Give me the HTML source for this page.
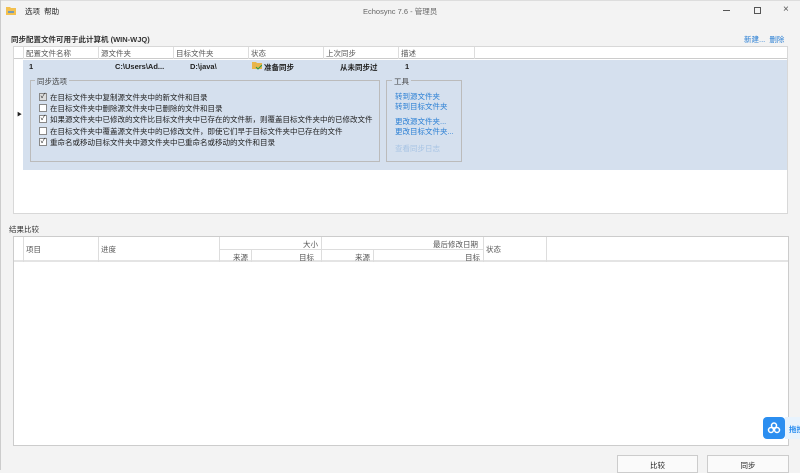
<!DOCTYPE html>
<html><head><meta charset="utf-8"><style>
*{margin:0;padding:0;box-sizing:border-box}
body{width:800px;height:470px;background:#f3f3f3;font-family:"Liberation Sans","Noto Sans CJK SC",sans-serif;font-size:7.5px;color:#222;position:relative;overflow:hidden;border-left:1px solid #ccc}
.a{position:absolute;white-space:nowrap}
.blue{color:#2a7fd4}
.hdr{background:#fff;border-bottom:1px solid #ddd}
.cb{position:absolute;width:8px;height:8px;border:1px solid #888;background:#fff;font-size:7px;line-height:6px;text-align:center}
</style></head><body>
<div class="a" style="left:0;top:0;width:800px;height:1px;background:#ddd"></div>
<svg class="a" style="left:5px;top:6px" width="11" height="10"><path d="M0 1h4l1 1h5v7H0z" fill="#f3c04f"/><path d="M2 6h6" stroke="#4a8fd8" stroke-width="1.5"/></svg>
<div class="a" style="left:24px;top:6px;font-size:7.5px">选项&nbsp;&nbsp;帮助</div>
<div class="a" style="left:362px;top:6px;font-size:7.5px;color:#666">Echosync 7.6 - 管理员</div>
<div class="a" style="left:722px;top:10px;width:7px;height:1px;background:#555"></div>
<div class="a" style="left:753px;top:7px;width:7px;height:7px;border:1px solid #555"></div>
<div class="a" style="left:782px;top:4px;font-size:10px;color:#555">×</div>
<div class="a" style="left:10px;top:34px;font-weight:bold;color:#333">同步配置文件可用于此计算机 (WIN-WJQ)</div>
<div class="a blue" style="left:743px;top:34px">新建...&nbsp;&nbsp;删除</div>

<div class="a" style="left:12px;top:46px;width:775px;height:168px;background:#fff;border:1px solid #d8d8d8"></div>
<div class="a hdr" style="left:13px;top:47px;width:773px;height:12px;border-bottom:1px solid #ccc"></div>
<div class="a" style="left:22px;top:47px;height:12px;width:1px;background:#ddd"></div>
<div class="a" style="left:97px;top:47px;height:12px;width:1px;background:#ddd"></div>
<div class="a" style="left:172px;top:47px;height:12px;width:1px;background:#ddd"></div>
<div class="a" style="left:247px;top:47px;height:12px;width:1px;background:#ddd"></div>
<div class="a" style="left:322px;top:47px;height:12px;width:1px;background:#ddd"></div>
<div class="a" style="left:397px;top:47px;height:12px;width:1px;background:#ddd"></div>
<div class="a" style="left:473px;top:47px;height:12px;width:1px;background:#ddd"></div>
<div class="a" style="left:25px;top:48px;color:#555">配置文件名称</div>
<div class="a" style="left:100px;top:48px;color:#555">源文件夹</div>
<div class="a" style="left:175px;top:48px;color:#555">目标文件夹</div>
<div class="a" style="left:250px;top:48px;color:#555">状态</div>
<div class="a" style="left:325px;top:48px;color:#555">上次同步</div>
<div class="a" style="left:400px;top:48px;color:#555">描述</div>
<div class="a" style="left:22px;top:60px;width:764px;height:110px;background:#d5e0ee"></div>
<div class="a" style="left:28px;top:62px;font-weight:bold">1</div>
<div class="a" style="left:114px;top:62px;font-weight:bold">C:\Users\Ad...</div>
<div class="a" style="left:189px;top:62px;font-weight:bold">D:\java\</div>
<svg class="a" style="left:251px;top:61px" width="10" height="9"><path d="M0 1h4l1 1h5v6H0z" fill="#e8b54a"/><path d="M4 6l2 2 4-4" stroke="#2a9a4a" fill="none"/></svg>
<div class="a" style="left:263px;top:62px;font-weight:bold">准备同步</div>
<div class="a" style="left:339px;top:62px;font-weight:bold">从未同步过</div>
<div class="a" style="left:404px;top:62px;font-weight:bold">1</div>
<div class="a" style="left:16px;top:111px;font-size:5px">▶</div>
<div class="a" style="left:29px;top:80px;width:350px;height:82px;border:1px solid #bbb"></div>
<div class="a" style="left:34px;top:76px;background:#d5e0ee;padding:0 2px;color:#444">同步选项</div>
<div class="cb" style="left:38px;top:93px;background:#ddd">✓</div><div class="a" style="left:49px;top:92px">在目标文件夹中复制源文件夹中的新文件和目录</div>
<div class="cb" style="left:38px;top:104px"></div><div class="a" style="left:49px;top:103px">在目标文件夹中删除源文件夹中已删除的文件和目录</div>
<div class="cb" style="left:38px;top:115px">✓</div><div class="a" style="left:49px;top:114px">如果源文件夹中已修改的文件比目标文件夹中已存在的文件新，则覆盖目标文件夹中的已修改文件</div>
<div class="cb" style="left:38px;top:127px"></div><div class="a" style="left:49px;top:126px">在目标文件夹中覆盖源文件夹中的已修改文件，即使它们早于目标文件夹中已存在的文件</div>
<div class="cb" style="left:38px;top:138px">✓</div><div class="a" style="left:49px;top:137px">重命名或移动目标文件夹中源文件夹中已重命名或移动的文件和目录</div>
<div class="a" style="left:385px;top:80px;width:76px;height:82px;border:1px solid #bbb"></div>
<div class="a" style="left:391px;top:76px;background:#d5e0ee;padding:0 2px;color:#444">工具</div>
<div class="a blue" style="left:394px;top:91px">转到源文件夹</div>
<div class="a blue" style="left:394px;top:101px">转到目标文件夹</div>
<div class="a blue" style="left:394px;top:116px">更改源文件夹...</div>
<div class="a blue" style="left:394px;top:126px">更改目标文件夹...</div>
<div class="a" style="left:394px;top:143px;color:#a8c4e4">查看同步日志</div>

<div class="a" style="left:8px;top:224px;color:#333">结果比较</div>
<div class="a" style="left:12px;top:236px;width:776px;height:210px;background:#fff;border:1px solid #ccc"></div>
<div class="a" style="left:13px;top:237px;width:774px;height:25px;background:#fff;border-bottom:2px solid #e4e4e4"></div>
<div class="a" style="left:218px;top:249px;width:264px;height:1px;background:#ddd"></div>
<div class="a" style="left:22px;top:237px;width:1px;height:25px;background:#ddd"></div>
<div class="a" style="left:97px;top:237px;width:1px;height:25px;background:#ddd"></div>
<div class="a" style="left:218px;top:237px;width:1px;height:25px;background:#ddd"></div>
<div class="a" style="left:320px;top:237px;width:1px;height:25px;background:#ddd"></div>
<div class="a" style="left:482px;top:237px;width:1px;height:25px;background:#ddd"></div>
<div class="a" style="left:545px;top:237px;width:1px;height:25px;background:#ddd"></div>
<div class="a" style="left:250px;top:249px;width:1px;height:13px;background:#ddd"></div>
<div class="a" style="left:372px;top:249px;width:1px;height:13px;background:#ddd"></div>
<div class="a" style="left:25px;top:244px;color:#555">项目</div>
<div class="a" style="left:100px;top:244px;color:#555">进度</div>
<div class="a" style="left:302px;top:239px;color:#555">大小</div>
<div class="a" style="left:432px;top:239px;color:#555">最后修改日期</div>
<div class="a" style="left:485px;top:244px;color:#555">状态</div>
<div class="a" style="left:232px;top:252px;color:#555">来源</div>
<div class="a" style="left:298px;top:252px;color:#555">目标</div>
<div class="a" style="left:354px;top:252px;color:#555">来源</div>
<div class="a" style="left:464px;top:252px;color:#555">目标</div>

<div class="a" style="left:762px;top:417px;width:22px;height:22px;background:#2b8ef0;border-radius:4px"></div>
<svg class="a" style="left:766px;top:421px" width="14" height="14"><circle cx="7" cy="4.5" r="2.5" fill="none" stroke="#fff" stroke-width="1.5"/><circle cx="4" cy="9" r="2.5" fill="none" stroke="#fff" stroke-width="1.5"/><circle cx="10" cy="9" r="2.5" fill="none" stroke="#fff" stroke-width="1.5"/></svg>
<div class="a" style="left:784px;top:417px;width:16px;height:22px;background:#e8f3fd"></div>
<div class="a" style="left:788px;top:424px;color:#2b8ef0;font-weight:bold">拖拽</div>

<div class="a" style="left:616px;top:455px;width:81px;height:18px;background:#fafafa;border:1px solid #ccc;text-align:center;padding-top:4px">比较</div>
<div class="a" style="left:706px;top:455px;width:82px;height:18px;background:#fafafa;border:1px solid #ccc;text-align:center;padding-top:4px">同步</div>
</body></html>
